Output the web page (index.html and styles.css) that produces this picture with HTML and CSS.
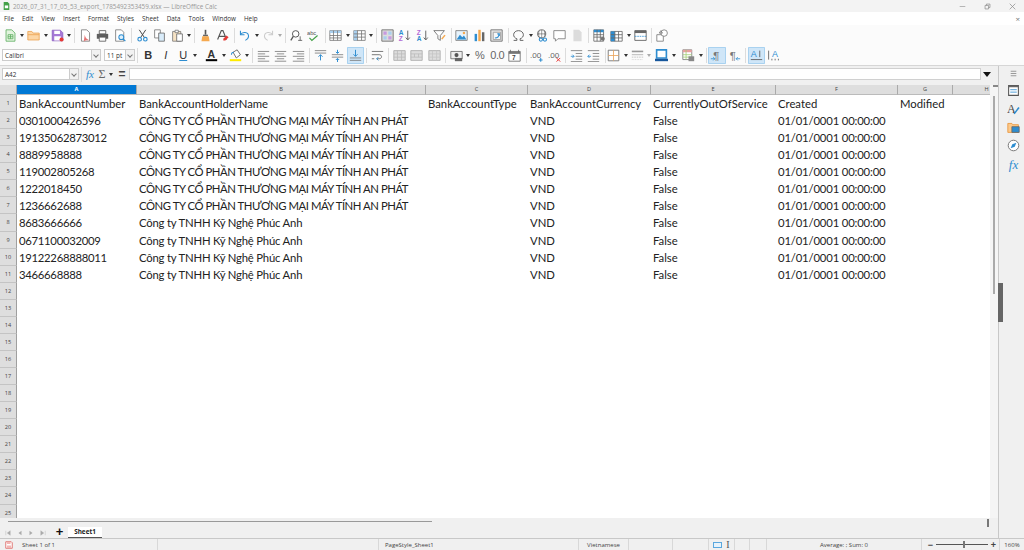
FILE: index.html
```html
<!DOCTYPE html>
<html lang="en">
<head>
    <meta charset="UTF-8">
    <title>2026_07_31_17_05_53_export_1785492353459.xlsx — LibreOffice Calc</title>
    <link rel="stylesheet" href="styles.css">
</head>
<body>
<div class="window">

  <div class="titlebar">
    <svg class="app-icon" viewBox="0 0 16 16"><path d="M3 1h7l3 3v11H3z" fill="#43a047"/><path d="M5 7h6v5H5z" fill="#fff"/></svg>
    <span class="title">2026_07_31_17_05_53_export_1785492353459.xlsx — LibreOffice Calc</span>
    <div class="win-btns">
      <svg viewBox="0 0 10 10"><path d="M1 5h8" stroke="#999"/></svg>
      <svg viewBox="0 0 10 10"><path d="M1.5 3.5h5v5h-5zM3.5 3.5v-2h5v5h-2" stroke="#888" fill="none"/></svg>
      <svg viewBox="0 0 10 10"><path d="M1 1l8 8M9 1l-8 8" stroke="#888"/></svg>
    </div>
  </div>

  <div class="menubar">
    <span>File</span><span>Edit</span><span>View</span><span>Insert</span><span>Format</span><span>Styles</span><span>Sheet</span><span>Data</span><span>Tools</span><span>Window</span><span>Help</span>
    <span class="doc-close">×</span>
  </div>

  <!-- standard toolbar -->
  <div class="toolbar tb-standard">
    <span class="tool"><svg viewBox="0 0 16 16"><path d="M2.5 1h7l4 4v10h-11z" fill="#e3f4df" stroke="#5cae60"/><path d="M5 7h6v5H5zM5 9.5h6M8 7v5" stroke="#5cae60" fill="none"/></svg></span><i class="drop"></i>
    <span class="tool"><svg viewBox="0 0 16 16"><path d="M1 3h5l1.5 2H15v8.500H1z" fill="#fcd6a6" stroke="#eba352"/><path d="M1 7h14" stroke="#eba352"/></svg></span><i class="drop"></i>
    <span class="tool"><svg viewBox="0 0 16 16"><path d="M1.500 1.500h10l3 3v10h-13z" fill="#a678d6" stroke="#8a5fc0"/><path d="M4 2h7v4H4zM4 9h8v5H4z" fill="#fff"/><circle cx="13" cy="13" r="2.500" fill="#e53935"/></svg></span><i class="drop"></i>
    <i class="sep"></i>
    <span class="tool"><svg viewBox="0 0 16 16"><path d="M3 1h6.500L13 4.500V15H3z" fill="#fff" stroke="#777"/><path d="M7 7c1 4 2 5 6 7-3-.500-6 0-7 1.500C6 13 7 10 7 7z" fill="#e57373"/></svg></span>
    <span class="tool"><svg viewBox="0 0 16 16"><path d="M4 2h8v4H4z" fill="#fff" stroke="#555"/><path d="M1 6h14v6H1z" fill="#5f5f5f"/><path d="M4 10h8v5H4z" fill="#fff" stroke="#555"/></svg></span>
    <span class="tool"><svg viewBox="0 0 16 16"><path d="M2 1h7l3 3v11H2z" fill="#fff" stroke="#777"/><circle cx="9" cy="10" r="3" fill="#dff0fb" stroke="#2e8dd0" stroke-width="1.300"/><path d="M11 12l3 3" stroke="#2e8dd0" stroke-width="1.500"/></svg></span>
    <i class="sep"></i>
    <span class="tool"><svg viewBox="0 0 16 16"><path d="M4 1l6 9M12 1l-6 9" stroke="#444" stroke-width="1.200"/><circle cx="4.500" cy="12.500" r="2.200" fill="none" stroke="#2e8dd0" stroke-width="1.400"/><circle cx="11.500" cy="12.500" r="2.200" fill="none" stroke="#2e8dd0" stroke-width="1.400"/></svg></span>
    <span class="tool"><svg viewBox="0 0 16 16"><path d="M2 1h7v10H2z" fill="#fff" stroke="#777"/><path d="M7 5h7v10H7z" fill="#d9ecfa" stroke="#666"/></svg></span>
    <span class="tool"><svg viewBox="0 0 16 16"><path d="M2 3h10v12H2z" fill="#f7e3c4" stroke="#777"/><path d="M5 1.500h4v3H5z" fill="#fff" stroke="#777"/><path d="M7 6h7v9H7z" fill="#fff" stroke="#666"/></svg></span><i class="drop"></i>
    <i class="sep"></i>
    <span class="tool"><svg viewBox="0 0 16 16"><path d="M7 1h2v6H7z" fill="#555"/><path d="M5 7h6v2H5z" fill="#666"/><path d="M4 9h8l1 6H3z" fill="#f5a94f"/></svg></span>
    <span class="tool"><svg viewBox="0 0 16 16"><path d="M2 13L6.500 2h2L13 13M4 9h7" fill="none" stroke="#555" stroke-width="1.400"/><path d="M9 12l4-4 2.500 2-4 4H9z" fill="#e53935"/></svg></span>
    <i class="sep"></i>
    <span class="tool"><svg viewBox="0 0 16 16"><path d="M3 2v5h5" fill="none" stroke="#2e8dd0" stroke-width="1.300"/><path d="M3 7c2-4 10-4 10 2 0 2-2 4-4 5" fill="none" stroke="#2e8dd0" stroke-width="1.300"/></svg></span><i class="drop"></i>
    <span class="tool"><svg viewBox="0 0 16 16"><path d="M13 2v5H8" fill="none" stroke="#ccc" stroke-width="1.300"/><path d="M13 7C11 3 3 3 3 9c0 2 2 4 4 5" fill="none" stroke="#ccc" stroke-width="1.300"/></svg></span><i class="drop light"></i>
    <i class="sep"></i>
    <span class="tool"><svg viewBox="0 0 16 16"><circle cx="7" cy="6" r="4" fill="#fff" stroke="#555" stroke-width="1.200"/><path d="M4 9l-3 5" stroke="#555" stroke-width="1.600"/><path d="M10 14h5M12.500 9v5" stroke="#555"/></svg></span>
    <span class="tool"><svg viewBox="0 0 16 16"><text x="0" y="7" class="ico-text">abc</text><path d="M3 11l3 3 7-6" fill="none" stroke="#43a047" stroke-width="1.500"/></svg></span>
    <i class="sep"></i>
    <span class="tool"><svg viewBox="0 0 16 16"><path d="M1 2h14v12H1z" fill="#fff" stroke="#777"/><path d="M1 2h14v3H1z" fill="#a9cfee"/><path d="M1 8h14M1 11h14M5.500 2v12M10.500 2v12" stroke="#777"/></svg></span><i class="drop"></i>
    <span class="tool"><svg viewBox="0 0 16 16"><path d="M1 2h14v12H1z" fill="#fff" stroke="#777"/><path d="M1 2h4v12H1z" fill="#a9cfee"/><path d="M1 6h14M1 10h14M5.500 2v12M10.500 2v12" stroke="#777"/></svg></span><i class="drop"></i>
    <i class="sep"></i>
    <span class="tool"><svg viewBox="0 0 16 16"><path d="M1 1h14v14H1z" fill="#ddd" stroke="#666"/><path d="M3 3h4v4H3zM9 9h4v4H9z" fill="#c79ae0"/><path d="M9 3h4v4H9zM3 9h4v4H3z" fill="#a9cfee"/></svg></span>
    <span class="tool"><svg viewBox="0 0 16 16"><text x="1" y="7" class="ico-az a">A</text><text x="1" y="15" class="ico-az z">Z</text><path d="M12 2v11M9.500 10.500l2.500 3 2.500-3" fill="none" stroke="#666" stroke-width="1.200"/></svg></span>
    <span class="tool"><svg viewBox="0 0 16 16"><text x="1" y="7" class="ico-az z">Z</text><text x="1" y="15" class="ico-az a">A</text><path d="M12 2v11M9.500 10.500l2.500 3 2.500-3" fill="none" stroke="#666" stroke-width="1.200"/></svg></span>
    <span class="tool"><svg viewBox="0 0 16 16"><path d="M1 2h13L9 8v6l-3-2V8z" fill="#fff" stroke="#666"/><path d="M10 12l4-5 1.500 1-4 5z" fill="#f5a94f"/></svg></span>
    <i class="sep"></i>
    <span class="tool"><svg viewBox="0 0 16 16"><path d="M1 2h14v12H1z" fill="#e8f3fb" stroke="#777"/><path d="M2 13l4-6 3 3 2-2 3 5z" fill="#2e8dd0"/><circle cx="11" cy="5" r="1.500" fill="#f5a94f"/></svg></span>
    <span class="tool"><svg viewBox="0 0 16 16"><path d="M2 6h3v9H2z" fill="#2e8dd0"/><path d="M6.500 1h3v14h-3z" fill="#f5a94f"/><path d="M11 4h3v11h-3z" fill="#666"/></svg></span>
    <span class="tool"><svg viewBox="0 0 16 16"><path d="M1 1h14v14H1z" fill="#e4e4e4" stroke="#666"/><path d="M4 4h9v9H4z" fill="#f6f6f6" stroke="#999"/><path d="M6 11c3 0 5-2 5-5M9 6h2.500v2.500" fill="none" stroke="#2e8dd0" stroke-width="1.300"/></svg></span>
    <i class="sep"></i>
    <span class="tool"><svg viewBox="0 0 16 16"><path d="M2 14h4v-2C3 11 2 9 2 7c0-3 3-5 6-5s6 2 6 5c0 2-1 4-4 5v2h4" fill="none" stroke="#555" stroke-width="1.100"/></svg></span><i class="drop"></i>
    <span class="tool"><svg viewBox="0 0 16 16"><circle cx="7" cy="6" r="5" fill="#fff" stroke="#555"/><path d="M2 6h10M7 1v10M4 2c-1 3-1 5 0 8M10 2c1 3 1 5 0 8" stroke="#555" fill="none" stroke-width=".7"/><circle cx="6" cy="13" r="2" fill="none" stroke="#2e8dd0" stroke-width="1.300"/><circle cx="11" cy="13" r="2" fill="none" stroke="#2e8dd0" stroke-width="1.300"/></svg></span>
    <span class="tool"><svg viewBox="0 0 16 16"><path d="M1 2h14v10H6l-3 3v-3H1z" fill="#fff" stroke="#777"/></svg></span>
    <span class="tool"><svg viewBox="0 0 16 16"><path d="M3 1h7l3 3v11H3z" fill="#dcdcdc"/></svg></span>
    <i class="sep"></i>
    <span class="tool"><svg viewBox="0 0 16 16"><path d="M1 1h12v14H1z" fill="#fff" stroke="#666"/><path d="M1 1h12v3H1z" fill="#2e8dd0"/><path d="M1 7h12M1 10h12M5 1v14M9 1v14" stroke="#666"/><circle cx="12" cy="12" r="2.500" fill="#777"/></svg></span>
    <span class="tool"><svg viewBox="0 0 16 16"><path d="M1 3h14v12H1z" fill="#fff" stroke="#666"/><path d="M1 3h5v12H1z" fill="#2e8dd0"/><path d="M1 7h14M1 11h14M6 3v12M10.500 3v12" stroke="#666"/></svg></span><i class="drop"></i>
    <span class="tool"><svg viewBox="0 0 16 16"><path d="M1 2h14v12H1z" fill="#fff" stroke="#555"/><path d="M1 2h14v3H1z" fill="#666"/><path d="M1 9h14" stroke="#2e8dd0" stroke-dasharray="2 1"/></svg></span>
    <i class="sep"></i>
    <span class="tool"><svg viewBox="0 0 16 16"><path d="M1 7h8v8H1z" fill="#fff" stroke="#777"/><circle cx="10" cy="5" r="4" fill="#fff" stroke="#777"/><path d="M4 5l2-3 2 3z" fill="none" stroke="#777"/></svg></span>
  </div>

  <!-- formatting toolbar -->
  <div class="toolbar tb-format">
    <div class="combo combo-font"><span>Calibri</span><b></b></div>
    <div class="combo combo-size"><span>11 pt</span><b></b></div>
    <i class="sep"></i>
    <span class="tool letter bold">B</span>
    <span class="tool letter italic">I</span>
    <span class="tool letter under">U</span><i class="drop"></i>
    <span class="tool tool-gap"><svg viewBox="0 0 16 16"><text x="3" y="11" class="ico-a">A</text><path d="M1 12.500h14V15H1z" fill="#000"/></svg></span><i class="drop"></i>
    <span class="tool"><svg viewBox="0 0 16 16"><path d="M5 4l5-3 4 6-5 4z" fill="#fff" stroke="#555"/><path d="M3 7c0-2 1-3 3-3" fill="none" stroke="#2e8dd0" stroke-width="1.300"/><path d="M1 12.500h14V15H1z" fill="#ffeb00"/></svg></span><i class="drop"></i>
    <i class="sep"></i>
    <span class="tool"><svg viewBox="0 0 16 16"><path d="M1 3h14M1 6h9M1 9h14M1 12h9M1 15h14" stroke="#777"/></svg></span>
    <span class="tool"><svg viewBox="0 0 16 16"><path d="M1 3h14M3.500 6h9M1 9h14M3.500 12h9M1 15h14" stroke="#777"/></svg></span>
    <span class="tool"><svg viewBox="0 0 16 16"><path d="M1 3h14M6 6h9M1 9h14M6 12h9M1 15h14" stroke="#777"/></svg></span>
    <i class="sep"></i>
    <span class="tool"><svg viewBox="0 0 16 16"><path d="M1 2h14M1 5h14" stroke="#777"/><path d="M8 14V7M5.500 9.500L8 7l2.500 2.500" fill="none" stroke="#2e8dd0" stroke-width="1.200"/></svg></span>
    <span class="tool"><svg viewBox="0 0 16 16"><path d="M1 7h14M1 10h14" stroke="#777"/><path d="M8 1v4M6 3.500L8 5.500l2-2M8 16v-4M6 13.500l2-2 2 2" fill="none" stroke="#2e8dd0" stroke-width="1.200"/></svg></span>
    <span class="tool active"><svg viewBox="0 0 16 16"><path d="M1 11h14M1 14h14" stroke="#777"/><path d="M8 1v8M5.500 6.500L8 9l2.500-2.500" fill="none" stroke="#2e8dd0" stroke-width="1.200"/></svg></span>
    <i class="sep"></i>
    <span class="tool"><svg viewBox="0 0 16 16"><path d="M1 3h14M1 7h9c4 0 4 5 0 5H7M1 12h3" fill="none" stroke="#777" stroke-width="1.200"/><path d="M9 10l-2 2 2 2" fill="none" stroke="#2e8dd0" stroke-width="1.200"/></svg></span>
    <i class="sep"></i>
    <span class="tool off"><svg viewBox="0 0 16 16"><path d="M1 2h14v12H1z" fill="#ddd" stroke="#aaa"/><path d="M1 6h14M1 10h14M5.500 2v12M10.500 2v12" stroke="#bbb"/></svg></span>
    <span class="tool off"><svg viewBox="0 0 16 16"><path d="M1 2h14v12H1z" fill="#ddd" stroke="#aaa"/><path d="M1 6h14M1 10h14M5.500 6v4M10.500 6v4" stroke="#bbb"/></svg></span>
    <span class="tool off"><svg viewBox="0 0 16 16"><path d="M1 2h14v12H1z" fill="#ddd" stroke="#aaa"/><path d="M1 6h14M1 10h14M5.500 2v12M10.500 2v12" stroke="#c5c5c5"/></svg></span>
    <i class="sep"></i>
    <span class="tool"><svg viewBox="0 0 16 16"><path d="M1 3h14v9H1z" fill="#eee" stroke="#666"/><circle cx="8" cy="7.500" r="2.500" fill="#555"/><path d="M6 11h9v4H6z" fill="#666"/></svg></span><i class="drop"></i>
    <span class="tool letter glyph">%</span>
    <span class="tool letter glyph">0.0</span>
    <span class="tool"><svg viewBox="0 0 16 16"><path d="M1 3h14v12H1z" fill="#fff" stroke="#666"/><path d="M1 3h14v3H1z" fill="#777"/><path d="M3 1v3M13 1v3" stroke="#666"/><text x="5" y="14" class="ico-date">7</text></svg></span>
    <i class="sep"></i>
    <span class="tool"><svg viewBox="0 0 16 16"><text x="0" y="11" class="ico-dec">.00</text><path d="M11 13.500h4.500M13.200 11.200v4.500" stroke="#2e8dd0" stroke-width="1.300"/></svg></span>
    <span class="tool"><svg viewBox="0 0 16 16"><text x="0" y="11" class="ico-dec">.00</text><path d="M10.500 11l4.500 4.500M15 11l-4.500 4.500" stroke="#e53935" stroke-width="1.200"/></svg></span>
    <i class="sep"></i>
    <span class="tool"><svg viewBox="0 0 16 16"><path d="M1 2h14M7 5.500h8M7 9h8M7 12.500h8M1 15.500h14" stroke="#777"/><path d="M1 9h4M3 7l2 2-2 2" fill="none" stroke="#2e8dd0"/></svg></span>
    <span class="tool"><svg viewBox="0 0 16 16"><path d="M1 2h14M7 5.500h8M7 9h8M7 12.500h8M1 15.500h14" stroke="#777"/><path d="M5 9H1M3 7L1 9l2 2" fill="none" stroke="#2e8dd0"/></svg></span>
    <i class="sep"></i>
    <span class="tool tool-back"><svg viewBox="0 0 16 16"><path d="M1.500 1.500h13v13h-13z" fill="#fff" stroke="#666"/><path d="M1.500 8h13M8 1.500v13" stroke="#e9a25a"/></svg></span><i class="drop"></i>
    <span class="tool"><svg viewBox="0 0 16 16"><path d="M1 3h14" stroke="#999" stroke-width="2"/><path d="M1 7h14" stroke="#aaa"/><path d="M1 10h14" stroke="#bbb" stroke-dasharray="2 1"/><path d="M1 13h14" stroke="#ccc" stroke-dasharray="1 1"/></svg></span><i class="drop light"></i>
    <span class="tool tool-on"><svg viewBox="0 0 16 16"><path d="M2 1h12v10H2z" fill="#fff" stroke="#2e8dd0" stroke-width="2"/><path d="M0 12h16v3H0z" fill="#17579c"/></svg></span><i class="drop"></i>
    <span class="tool tool-gap2"><svg viewBox="0 0 16 16"><path d="M1 1h11v12H1z" fill="#fff" stroke="#777"/><path d="M1 1h11v3H1z" fill="#e8a0a0"/><path d="M1 7h11M1 10h11M5 1v12" stroke="#a5cf78"/><path d="M8 9h7v6H8z" fill="#888"/></svg></span><i class="drop"></i>
    <i class="sep"></i>
    <span class="tool active"><svg viewBox="0 0 16 16"><text x="4" y="13" class="ico-para">¶</text><path d="M1 12h5M4 10l2 2-2 2" fill="none" stroke="#2e8dd0"/></svg></span>
    <span class="tool"><svg viewBox="0 0 16 16"><text x="2" y="13" class="ico-para">¶</text><path d="M10 12h5M12 10l-2 2 2 2" fill="none" stroke="#2e8dd0"/></svg></span>
    <i class="sep"></i>
    <span class="tool active"><svg viewBox="0 0 16 16"><text x="1" y="10" class="ico-az2">A</text><path d="M12 2v8M1 13h14" stroke="#555"/></svg></span>
    <span class="tool"><svg viewBox="0 0 16 16"><text x="6" y="10" class="ico-az2">A</text><path d="M2 2v11M6 12v2M10 12v2M14 12v2" stroke="#555"/></svg></span>
  </div>

  <div class="main">
    <div class="sheet-area">
      <!-- formula bar -->
      <div class="formulabar">
        <div class="combo combo-name"><span>A42</span><b></b></div>
        <i class="sep"></i>
        <span class="fx">fx</span>
        <span class="sigma">Σ</span><i class="drop"></i>
        <span class="equals">=</span>
        <div class="formula-input"></div>
        <i class="formula-arrow"></i>
      </div>

      <div class="grid-wrap">
        <div class="sheet">
          <div class="row col-head">
            <div class="corner"></div><div class="sel-col">A</div><div>B</div><div>C</div><div>D</div><div>E</div><div>F</div><div>G</div><div class="col-h">H</div>
          </div>
          <div class="row"><div class="rh">1</div><div>BankAccountNumber</div><div>BankAccountHolderName</div><div>BankAccountType</div><div>BankAccountCurrency</div><div>CurrentlyOutOfService</div><div>Created</div><div>Modified</div></div>
          <div class="row"><div class="rh">2</div><div class="num">0301000426596</div><div class="caps">CÔNG TY CỔ PHẦN THƯƠNG MẠI MÁY TÍNH AN PHÁT</div><div></div><div>VND</div><div>False</div><div class="date">01/01/0001 00:00:00</div></div>
          <div class="row"><div class="rh">3</div><div class="num">19135062873012</div><div class="caps">CÔNG TY CỔ PHẦN THƯƠNG MẠI MÁY TÍNH AN PHÁT</div><div></div><div>VND</div><div>False</div><div class="date">01/01/0001 00:00:00</div></div>
          <div class="row"><div class="rh">4</div><div class="num">8889958888</div><div class="caps">CÔNG TY CỔ PHẦN THƯƠNG MẠI MÁY TÍNH AN PHÁT</div><div></div><div>VND</div><div>False</div><div class="date">01/01/0001 00:00:00</div></div>
          <div class="row"><div class="rh">5</div><div class="num">119002805268</div><div class="caps">CÔNG TY CỔ PHẦN THƯƠNG MẠI MÁY TÍNH AN PHÁT</div><div></div><div>VND</div><div>False</div><div class="date">01/01/0001 00:00:00</div></div>
          <div class="row"><div class="rh">6</div><div class="num">1222018450</div><div class="caps">CÔNG TY CỔ PHẦN THƯƠNG MẠI MÁY TÍNH AN PHÁT</div><div></div><div>VND</div><div>False</div><div class="date">01/01/0001 00:00:00</div></div>
          <div class="row"><div class="rh">7</div><div class="num">1236662688</div><div class="caps">CÔNG TY CỔ PHẦN THƯƠNG MẠI MÁY TÍNH AN PHÁT</div><div></div><div>VND</div><div>False</div><div class="date">01/01/0001 00:00:00</div></div>
          <div class="row"><div class="rh">8</div><div class="num">8683666666</div><div class="mixed">Công ty TNHH Kỹ Nghệ Phúc Anh</div><div></div><div>VND</div><div>False</div><div class="date">01/01/0001 00:00:00</div></div>
          <div class="row"><div class="rh">9</div><div class="num">0671100032009</div><div class="mixed">Công ty TNHH Kỹ Nghệ Phúc Anh</div><div></div><div>VND</div><div>False</div><div class="date">01/01/0001 00:00:00</div></div>
          <div class="row"><div class="rh">10</div><div class="num">19122268888011</div><div class="mixed">Công ty TNHH Kỹ Nghệ Phúc Anh</div><div></div><div>VND</div><div>False</div><div class="date">01/01/0001 00:00:00</div></div>
          <div class="row"><div class="rh">11</div><div class="num">3466668888</div><div class="mixed">Công ty TNHH Kỹ Nghệ Phúc Anh</div><div></div><div>VND</div><div>False</div><div class="date">01/01/0001 00:00:00</div></div>
          <div class="row"><div class="rh">12</div></div>
          <div class="row"><div class="rh">13</div></div>
          <div class="row"><div class="rh">14</div></div>
          <div class="row"><div class="rh">15</div></div>
          <div class="row"><div class="rh">16</div></div>
          <div class="row"><div class="rh">17</div></div>
          <div class="row"><div class="rh">18</div></div>
          <div class="row"><div class="rh">19</div></div>
          <div class="row"><div class="rh">20</div></div>
          <div class="row"><div class="rh">21</div></div>
          <div class="row"><div class="rh">22</div></div>
          <div class="row"><div class="rh">23</div></div>
          <div class="row"><div class="rh">24</div></div>
          <div class="row"><div class="rh">25</div></div>
        </div>
        <div class="vscroll"><div class="vthumb"></div></div>
      </div>
      <div class="tabbar">
        <div class="hscroll"></div>
        <div class="tabs">
          <div class="tab-nav">
            <svg viewBox="0 0 8 8"><path d="M1 1v6M7 1L3 4l4 3z" fill="#aaa" stroke="#aaa" stroke-width=".5"/></svg>
            <svg viewBox="0 0 8 8"><path d="M6 1L2 4l4 3z" fill="#aaa"/></svg>
            <svg viewBox="0 0 8 8"><path d="M2 1l4 3-4 3z" fill="#aaa"/></svg>
            <svg viewBox="0 0 8 8"><path d="M7 1v6M1 1l4 3-4 3z" fill="#aaa" stroke="#aaa" stroke-width=".5"/></svg>
          </div>
          <span class="tab-add">+</span>
          <span class="tab">Sheet1</span>
          <i class="tab-grip"></i>
        </div>
      </div>
    </div>

    <div class="sidebar">
      <i class="sash"></i>
      <svg class="side-menu" viewBox="0 0 16 16"><path d="M3 4h10M3 8h10M3 12h10" stroke="#888" stroke-width="1.500"/></svg>
      <svg viewBox="0 0 16 16"><path d="M2 2h12v12H2z" fill="#fff" stroke="#555" stroke-width="1.300"/><path d="M2 2h12v2H2z" fill="#666"/><path d="M4 7h8M4 10h8" stroke="#2e8dd0"/></svg>
      <svg viewBox="0 0 16 16"><text x="0" y="13" class="ico-styles">A</text><path d="M8 14l6-8 1.500 1.500-6 7.500z" fill="#2e8dd0"/></svg>
      <svg viewBox="0 0 16 16"><path d="M1 3h5l1 1.500h7V14H1z" fill="#fcc98a" stroke="#e9943a"/><path d="M6 7h9v7H6z" fill="#2e8dd0" stroke="#666"/></svg>
      <svg viewBox="0 0 16 16"><circle cx="8" cy="8" r="6.500" fill="#fff" stroke="#777" stroke-width="1.200"/><path d="M11.500 4.500L9.500 9.500 4.500 11.500 6.500 6.500z" fill="#2e8dd0"/></svg>
      <span class="side-fx">fx</span>
    </div>
  </div>

  <div class="statusbar">
    <span class="st st-save"><svg viewBox="0 0 16 16"><path d="M1.500 1.500h11l2 2v11h-13z" fill="#fff" stroke="#d9534f" stroke-width="1.500"/><path d="M4 2h7v4H4zM4 9h8v5H4z" fill="#f2b5b3"/></svg></span>
    <span class="st st-count">Sheet 1 of 1</span>
    <span class="st st-blank"></span>
    <span class="st st-page">PageStyle_Sheet1</span>
    <span class="st st-lang">Vietnamese</span>
    <span class="st st-a"></span>
    <span class="st st-a2"></span>
    <span class="st st-sel"><i class="sel-box"></i><i class="ibeam">I</i></span>
    <span class="st st-b"></span>
    <span class="st st-c"></span>
    <span class="st st-sum">Average: ; Sum: 0</span>
    <span class="st st-zoom"><em>−</em><i class="slider"><i class="knob"></i></i><em>+</em></span>
    <span class="st st-pct">160%</span>
  </div>

</div>
</body>
</html>
```

FILE: styles.css
```css
* {
    margin: 0;
    padding: 0;
    box-sizing: border-box;
}

body {
    font-family: "Open Sans", "Noto Sans", sans-serif;
    color: #333;
    background-color: #f0f0f0;
    overflow: hidden;
}

.window {
    width: 1024px;
    height: 550px;
    display: flex;
    flex-direction: column;
    overflow: hidden;
}

i, em {
    font-style: normal;
}

/* title and menu */
.titlebar {
    height: 12px;
    display: flex;
    align-items: center;
    padding-left: 2px;
    background-color: #f3f3f3;
    flex: none;
}

.app-icon {
    width: 9px;
    height: 10px;
}

.title {
    margin-left: 2px;
    font-size: 6.3px;
    color: #999;
    white-space: nowrap;
}

.win-btns {
    margin-left: auto;
    display: flex;
    gap: 18px;
    padding-right: 8px;
}

.win-btns svg {
    width: 7px;
    height: 7px;
}

.menubar {
    height: 13px;
    display: flex;
    align-items: center;
    background-color: #fff;
    font-size: 6.3px;
    padding-left: 4px;
    gap: 8px;
    flex: none;
}

.doc-close {
    margin-left: auto;
    padding-right: 4px;
    font-size: 8px;
    color: #777;
}

/* toolbars */
.toolbar {
    height: 20px;
    display: flex;
    align-items: center;
    background-color: #fbfbfb;
    flex: none;
}

.tb-standard {
    padding-left: 1.5px;
}

.tb-format {
    padding-left: 2px;
    border-bottom: 1px solid #d6d6d6;
    height: 21px;
}

.tool {
    width: 17.5px;
    height: 17px;
    flex: none;
    display: flex;
    align-items: center;
    justify-content: center;
    border-radius: 1px;
}

.tool svg {
    width: 13px;
    height: 13px;
}

.tool.active {
    background-color: #cfe6f8;
    box-shadow: inset 0 0 0 1px #a9d2f0;
}

.tool-gap {
    margin-left: 5px;
}

.tool-back {
    margin-left: -2px;
}

.tool-on {
    margin-left: 1px;
}

.tool-gap2 {
    margin-left: 3.5px;
}

.drop {
    width: 6px;
    height: 17px;
    flex: none;
    position: relative;
}

.drop::after {
    content: "";
    position: absolute;
    left: 1px;
    top: 7px;
    border-left: 2.5px solid transparent;
    border-right: 2.5px solid transparent;
    border-top: 3px solid #333;
}

.drop.light::after {
    border-top-color: #aaa;
}

.sep {
    width: 4.5px;
    height: 15px;
    flex: none;
    position: relative;
}

.sep::after {
    content: "";
    position: absolute;
    left: 2px;
    top: 0;
    bottom: 0;
    width: 1px;
    background-color: #dcdcdc;
}

.letter {
    font-family: "Liberation Sans", sans-serif;
    font-size: 11px;
    color: #333;
}

.bold {
    font-weight: bold;
}

.italic {
    font-style: italic;
}

.under {
    text-decoration: underline;
    text-decoration-color: #2e8dd0;
}

.glyph {
    font-size: 11px;
    color: #666;
    letter-spacing: -0.5px;
}

.ico-dec {
    font-family: "Liberation Sans", sans-serif;
    font-size: 10px;
    fill: #666;
}

.ico-text {
    font-family: "Liberation Sans", sans-serif;
    font-size: 7px;
    fill: #555;
}

.ico-az {
    font-family: "Liberation Sans", sans-serif;
    font-size: 8px;
    font-weight: bold;
}

.ico-az.a {
    fill: #2e8dd0;
}

.ico-az.z {
    fill: #b36ad6;
}

.ico-a {
    font-family: "Liberation Sans", sans-serif;
    font-size: 13px;
    font-weight: bold;
    fill: #333;
}

.ico-date {
    font-family: "Liberation Sans", sans-serif;
    font-size: 8px;
    font-weight: bold;
    fill: #444;
}

.ico-para {
    font-family: "Liberation Sans", sans-serif;
    font-size: 14px;
    fill: #777;
}

.ico-az2 {
    font-family: "Liberation Sans", sans-serif;
    font-size: 11px;
    fill: #2e8dd0;
}

.ico-styles {
    font-family: "Liberation Serif", serif;
    font-size: 15px;
    fill: #444;
}

/* name box, font box */
.combo {
    height: 12px;
    display: flex;
    align-items: center;
    flex: none;
    background-color: #fff;
    border: 1px solid #ccc;
    font-size: 6.4px;
    padding-left: 2px;
    position: relative;
}

.combo b {
    position: absolute;
    right: 0;
    top: 0;
    bottom: 0;
    width: 9px;
    background-color: #f2f2f2;
    border-left: 1px solid #ccc;
}

.combo b::after {
    content: "";
    position: absolute;
    left: 2px;
    top: 3px;
    width: 3px;
    height: 3px;
    border-right: 1px solid #777;
    border-bottom: 1px solid #777;
    transform: rotate(45deg);
}

.combo-font {
    width: 99px;
}

.combo-size {
    width: 31px;
    margin-left: 3px;
}

.combo-name {
    width: 77px;
}

.formulabar {
    height: 19px;
    display: flex;
    align-items: center;
    padding: 0 0 3px 2px;
    background-color: #f0f0f0;
    flex: none;
}

.fx {
    width: 13px;
    font-family: "Liberation Serif", serif;
    font-style: italic;
    font-size: 11px;
    color: #2e8dd0;
    text-align: center;
}

.sigma {
    width: 11px;
    font-family: "Liberation Serif", serif;
    font-size: 12px;
    color: #666;
    text-align: center;
}

.equals {
    width: 13px;
    margin-left: 2px;
    font-family: "Liberation Sans", sans-serif;
    font-size: 12px;
    font-weight: bold;
    color: #444;
    text-align: center;
}

.formula-input {
    width: 852px;
    height: 12px;
    background-color: #fff;
    border: 1px solid #d0d0d0;
}

.formula-arrow {
    margin-left: 2.5px;
    border-left: 4.500px solid transparent;
    border-right: 4.500px solid transparent;
    border-top: 5px solid #111;
}

/* spreadsheet */
.main {
    flex: 1;
    min-height: 0;
    display: flex;
}

.sheet-area {
    flex: 1;
    min-width: 0;
    display: flex;
    flex-direction: column;
}

.grid-wrap {
    flex: 1;
    min-height: 0;
    display: flex;
    overflow: hidden;
}

.sheet {
    width: 990px;
    flex: none;
    overflow: hidden;
    background-color: #fff;
    font-family: "Lato", "Noto Sans", sans-serif;
    font-size: 11.3px;
    color: #222;
}

.row {
    height: 17.07px;
    display: grid;
    grid-template-columns: 17px 120px 289px 102px 123px 125px 122px 55px 68px;
    align-items: center;
    white-space: nowrap;
}

.row > div {
    padding-left: 2px;
}

.row > .num {
    letter-spacing: -0.28px;
}

.row > .caps {
    letter-spacing: -0.44px;
}

.row > .mixed {
    letter-spacing: -0.19px;
}

.row > .date {
    letter-spacing: -0.16px;
}

.row > .rh {
    height: 100%;
    padding-left: 0;
    background-color: #dedede;
    border-right: 1px solid #9f9f9f;
    border-bottom: 1px solid #c4c4c4;
    display: flex;
    align-items: center;
    justify-content: center;
    font-family: "Open Sans", sans-serif;
    font-size: 5.6px;
    color: #444;
}

.col-head {
    height: 10px;
}

.col-head > div {
    height: 100%;
    padding-left: 0;
    background-color: #dedede;
    border-right: 1px solid #aaa;
    border-bottom: 1px solid #bbb;
    text-align: center;
    font-family: "Open Sans", sans-serif;
    font-size: 5.6px;
    line-height: 9px;
    color: #444;
}

.col-head > .sel-col {
    background-color: #0078d4;
    color: #fff;
    font-weight: bold;
}

.vscroll {
    width: 8px;
    flex: none;
    background-color: #f5f5f5;
    position: relative;
}

.vscroll::before {
    content: "";
    position: absolute;
    left: 3px;
    top: 0;
    width: 5px;
    height: 2px;
    background-color: #888;
}

.vthumb {
    position: absolute;
    left: 3px;
    top: 11px;
    width: 2px;
    height: 198px;
    background-color: #aaa;
}

.tabbar {
    height: 20px;
    flex: none;
    background-color: #f0f0f0;
    position: relative;
}

.hscroll {
    position: absolute;
    left: 8px;
    top: 3px;
    width: 424px;
    height: 1px;
    background-color: #999;
}

.tabs {
    position: absolute;
    left: 0;
    right: 0;
    bottom: 0;
    height: 11px;
    display: flex;
    align-items: stretch;
}

.tab-nav {
    display: flex;
    align-items: center;
    gap: 5.500px;
    padding-left: 5px;
    width: 51px;
}

.tab-nav svg {
    width: 6px;
    height: 6px;
}

.tab-add {
    width: 17px;
    font-family: "Liberation Sans", sans-serif;
    font-size: 13px;
    font-weight: bold;
    line-height: 10px;
    color: #111;
    text-align: center;
}

.tab {
    width: 34px;
    background-color: #fff;
    border-bottom: 1px solid #555;
    font-size: 6.4px;
    font-weight: bold;
    color: #222;
    text-align: center;
    line-height: 10px;
}

.tab-grip {
    position: absolute;
    left: 987px;
    top: -8px;
    width: 2px;
    height: 8px;
    background-color: #777;
}

/* right deck */
.sidebar {
    width: 26px;
    flex: none;
    display: flex;
    flex-direction: column;
    align-items: center;
    gap: 5.500px;
    padding-top: 3px;
    padding-left: 4px;
    background-color: #f0f0f0;
    border-left: 1px solid #c8c8c8;
    position: relative;
}

.sidebar svg {
    width: 13px;
    height: 13px;
}

.sidebar .side-menu {
    width: 9px;
    height: 9px;
}

.sash {
    position: absolute;
    left: -1px;
    top: 217px;
    width: 5px;
    height: 39px;
    background-color: #666;
}

.side-fx {
    font-family: "Liberation Serif", serif;
    font-style: italic;
    font-size: 13px;
    line-height: 13px;
    color: #2e8dd0;
}

/* status bar */
.statusbar {
    height: 12px;
    flex: none;
    display: flex;
    align-items: center;
    background-color: #f0f0f0;
    border-top: 1px solid #c8c8c8;
    font-size: 6px;
    color: #444;
}

.st {
    height: 100%;
    flex: none;
    display: flex;
    align-items: center;
    padding-left: 4px;
    border-right: 1px solid #d8d8d8;
    white-space: nowrap;
}

.st-save {
    width: 18px;
    padding-left: 5px;
    border-right: 0;
}

.st-save svg {
    width: 8px;
    height: 8px;
}

.st-count {
    width: 140px;
}

.st-blank {
    width: 221px;
}

.st-page {
    width: 200px;
    padding-left: 6px;
}

.st-lang {
    width: 50px;
    justify-content: center;
    padding-left: 0;
}

.st-a {
    width: 44px;
}

.st-a2 {
    width: 36px;
}

.st-sel {
    width: 26px;
    justify-content: center;
    gap: 4px;
    padding-left: 0;
}

.sel-box {
    width: 9px;
    height: 6px;
    border: 1px solid #5aa7de;
    background-color: #e6f2fb;
}

.ibeam {
    font-family: "Liberation Serif", serif;
    font-size: 10px;
    color: #555;
}

.st-b {
    width: 15px;
}

.st-c {
    width: 17px;
}

.st-sum {
    width: 155px;
    justify-content: center;
    padding-left: 0;
}

.st-zoom {
    width: 78px;
    padding-left: 5px;
    gap: 2px;
}

.st-zoom em {
    font-family: "Liberation Sans", sans-serif;
    font-size: 9px;
    font-weight: bold;
    width: 7px;
    text-align: center;
}

.slider {
    width: 52px;
    height: 1px;
    background-color: #555;
    position: relative;
}

.knob {
    position: absolute;
    left: 27px;
    top: -3px;
    width: 2px;
    height: 7px;
    background-color: #777;
}

.st-pct {
    flex: 1;
    justify-content: center;
    padding-left: 0;
    border-right: 0;
}
```
